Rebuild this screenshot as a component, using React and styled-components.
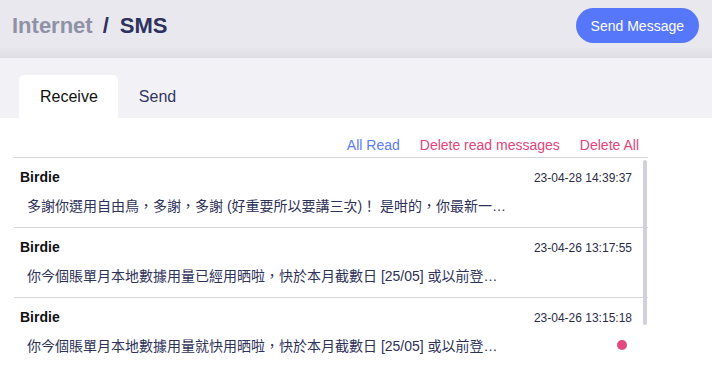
import React from 'react';
import styled, { createGlobalStyle } from 'styled-components';

const Global = createGlobalStyle`
html, body {
  margin:0;
  padding:0;
  background:#ffffff;
  font-family:"Liberation Sans", Arial, "Noto Sans CJK TC", sans-serif;
}
`;

const Page = styled.div`
height:100vh;
overflow:hidden;
display:flex;
flex-direction:column;
`;

const Header = styled.div`
height:58px;
flex-shrink:0;
box-sizing:border-box;
display:flex;
align-items:flex-start;
justify-content:space-between;
padding:8px 13px 0 12px;
background:linear-gradient(to bottom, #e9e8ee 0%, #e9e8ee 80%, #dfdee4 100%);
`;

const Title = styled.h1`
margin:0;
padding-top:5px;
font-size:22px;
font-weight:700;
line-height:26px;
color:#2e3160;
`;

const Crumb = styled.span`
color:#8f91a6;
`;

const Slash = styled.span`
margin:0 11px 0 10px;
`;

const SendBtn = styled.button`
height:35px;
padding:0 15px;
border:none;
border-radius:18px;
background:#5677fa;
color:#ffffff;
font-family:inherit;
font-size:14px;
cursor:pointer;
`;

const TabBar = styled.div`
display:flex;
align-items:flex-end;
height:60px;
flex-shrink:0;
box-sizing:border-box;
padding-left:19px;
background:#f2f1f6;
`;

const Tab = styled.div`
height:43px;
padding:0 20px 0 21px;
display:flex;
align-items:center;
font-size:16px;
border-radius:5px 5px 0 0;
background:${p => p.active ? '#ffffff' : 'transparent'};
color:${p => p.active ? '#111111' : '#333660'};
`;

const Body = styled.div`
padding:0 64px 0 14px;
`;

const Actions = styled.div`
display:flex;
justify-content:flex-end;
height:39px;
align-items:flex-end;
padding-bottom:4px;
box-sizing:border-box;
`;

const Action = styled.span`
font-size:14px;
padding:0 10px;
color:${p => p.color};
cursor:pointer;
&:last-child { padding-right:9px; }
`;

const List = styled.div`
position:relative;
border-top:1px solid #d6d6da;
`;

const Thumb = styled.div`
position:absolute;
top:2px;
right:1px;
width:4px;
height:165px;
border-radius:2px;
background:#d0d1d9;
`;

const Row = styled.div`
padding:9px 16px 13px 6px;
border-bottom:1px solid #d6d6da;
height:70px;
box-sizing:border-box;
`;

const RowTop = styled.div`
display:flex;
justify-content:space-between;
align-items:center;
height:20px;
`;

const Name = styled.span`
font-size:14px;
font-weight:700;
color:#111111;
`;

const Time = styled.span`
font-size:12px;
color:#2b2d48;
padding-top:1px;
`;

const RowMsg = styled.div`
display:flex;
justify-content:space-between;
align-items:center;
height:20px;
margin-top:8px;
`;

const Msg = styled.div`
width:482px;
padding-left:7px;
font-size:14px;
color:#2e3158;
white-space:nowrap;
overflow:hidden;
text-overflow:ellipsis;
`;

const Dot = styled.span`
width:10px;
height:10px;
border-radius:50%;
margin-right:5px;
background:#e24a7d;
`;

const messages = [
  { id:1, name:'Birdie', time:'23-04-28 14:39:37', text:'多謝你選用自由鳥，多謝，多謝 (好重要所以要講三次)！ 是咁的，你最新一期賬單已經準備好', unread:false },
  { id:2, name:'Birdie', time:'23-04-26 13:17:55', text:'你今個賬單月本地數據用量已經用晒啦，快於本月截數日 [25/05] 或以前登入自由鳥', unread:false },
  { id:3, name:'Birdie', time:'23-04-26 13:15:18', text:'你今個賬單月本地數據用量就快用晒啦，快於本月截數日 [25/05] 或以前登入自由鳥', unread:true },
];

const App = () => {
  return (
    <Page>
      <Global />
      <Header>
        <Title><Crumb>Internet</Crumb><Slash>/</Slash>SMS</Title>
        <SendBtn>Send Message</SendBtn>
      </Header>
      <TabBar>
        <Tab active>Receive</Tab>
        <Tab>Send</Tab>
      </TabBar>
      <Body>
        <Actions>
          <Action color="#5a7cf5">All Read</Action>
          <Action color="#e0457b">Delete read messages</Action>
          <Action color="#e0457b">Delete All</Action>
        </Actions>
        <List>
          {messages.map(m =>
            <Row key={m.id}>
              <RowTop>
                <Name>{m.name}</Name>
                <Time>{m.time}</Time>
              </RowTop>
              <RowMsg>
                <Msg>{m.text}</Msg>
                {m.unread && <Dot />}
              </RowMsg>
            </Row>
          )}
          <Thumb />
        </List>
      </Body>
    </Page>
  );
};

export default App;
